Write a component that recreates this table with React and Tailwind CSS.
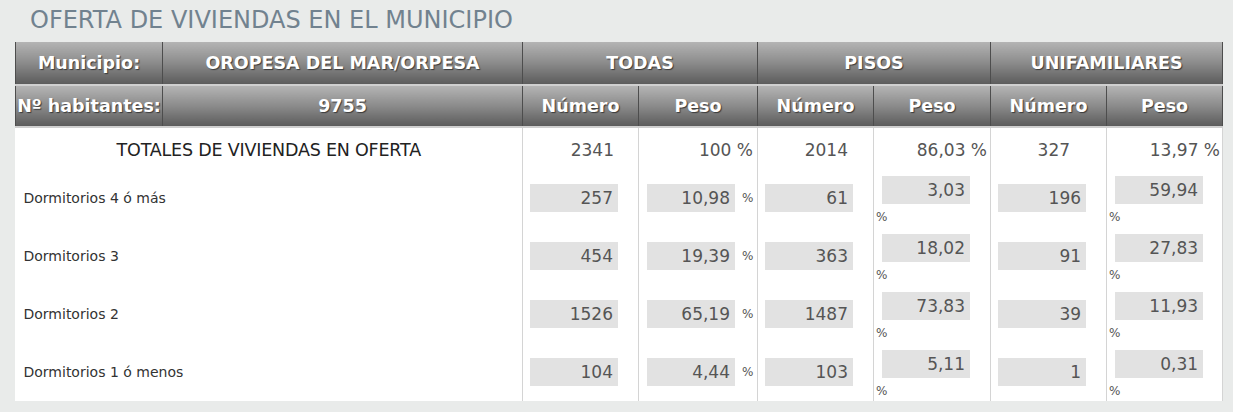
import React from "react";

const filas = [
  { label: "Dormitorios 4 ó más", tn: "257", tp: "10,98", pn: "61", pp: "3,03", un: "196", up: "59,94" },
  { label: "Dormitorios 3", tn: "454", tp: "19,39", pn: "363", pp: "18,02", un: "91", up: "27,83" },
  { label: "Dormitorios 2", tn: "1526", tp: "65,19", pn: "1487", pp: "73,83", un: "39", up: "11,93" },
  { label: "Dormitorios 1 ó menos", tn: "104", tp: "4,44", pn: "103", pp: "5,11", un: "1", up: "0,31" },
];

const th =
  "border-x border-[#4d4d4d] border-b-2 border-b-[#cfcfcf] bg-linear-to-b from-[#b4b4b4] via-[#8b8b8b] to-[#5c5c5c] text-white font-bold text-[17.5px] text-center [text-shadow:1px_1px_1px_#3a3a3a] p-0";

const Caja = ({ children }) => (
  <div className="w-[88px] h-[28px] bg-[#e2e2e2] text-right pr-[5px] leading-[28px] text-[17px] text-[#555]">
    {children}
  </div>
);

export default function App() {
  return (
    <div className="min-h-[412px] bg-[#e9ebea] pt-[5px] font-['DejaVu_Sans',Tahoma,sans-serif]">
      <h1 className="pl-[30px] text-[24px] leading-[31px] text-[#71828f] font-normal">
        OFERTA DE VIVIENDAS EN EL MUNICIPIO
      </h1>
      <table className="ml-[15px] mt-[6px] w-[1207px] table-fixed border-collapse bg-white">
        <colgroup>
          <col className="w-[147px]" />
          <col className="w-[360px]" />
          <col className="w-[116px]" />
          <col className="w-[119px]" />
          <col className="w-[116px]" />
          <col className="w-[117px]" />
          <col className="w-[116px]" />
          <col className="w-[116px]" />
        </colgroup>
        <thead>
          <tr className="h-[43px]">
            <th className={th}>Municipio:</th>
            <th className={th}>OROPESA DEL MAR/ORPESA</th>
            <th className={th} colSpan={2}>TODAS</th>
            <th className={th} colSpan={2}>PISOS</th>
            <th className={th} colSpan={2}>UNIFAMILIARES</th>
          </tr>
          <tr className="h-[42px]">
            <th className={th + " whitespace-nowrap"}>Nº habitantes:</th>
            <th className={th}>9755</th>
            <th className={th}>Número</th>
            <th className={th}>Peso</th>
            <th className={th}>Número</th>
            <th className={th}>Peso</th>
            <th className={th}>Número</th>
            <th className={th}>Peso</th>
          </tr>
        </thead>
        <tbody className="text-[#444]">
          <tr className="h-[42px] text-[16px]">
            <td colSpan={2} className="text-center text-[17.5px] tracking-[-0.2px] text-[#222] pt-[4px]">TOTALES DE VIVIENDAS EN OFERTA</td>
            <td className="border-x border-[#d4d4d4] text-right pr-[24px] text-[17px] text-[#555] pt-[4px]">2341</td>
            <td className="border-x border-[#d4d4d4] text-right pr-[4px] text-[17px] text-[#555] pt-[4px]">100 %</td>
            <td className="border-x border-[#d4d4d4] text-right pr-[25px] text-[17px] text-[#555] pt-[4px]">2014</td>
            <td className="border-x border-[#d4d4d4] text-right pr-[3px] text-[17px] text-[#555] pt-[4px]">86,03 %</td>
            <td className="border-x border-[#d4d4d4] text-right pr-[36px] text-[17px] text-[#555] pt-[4px]">327</td>
            <td className="border-x border-[#d4d4d4] text-right pr-[2px] text-[17px] text-[#555] pt-[4px]">13,97 %</td>
          </tr>
          {filas.map((f) => (
            <tr key={f.label} className="h-[58px]">
              <td colSpan={2} className="pl-[8px] text-[14px] text-[#333]">{f.label}</td>
              <td className="border-x border-[#d4d4d4] pl-[7px]">
                <Caja>{f.tn}</Caja>
              </td>
              <td className="border-x border-[#d4d4d4] pl-[8px]">
                <div className="flex items-center gap-[7px]">
                  <Caja>{f.tp}</Caja>
                  <span className="text-[12px] text-[#555]">%</span>
                </div>
              </td>
              <td className="border-x border-[#d4d4d4] pl-[7px]">
                <Caja>{f.pn}</Caja>
              </td>
              <td className="border-x border-[#d4d4d4] pl-[8px] pt-[7px] align-top">
                <Caja>{f.pp}</Caja>
                <div className="mt-[6px] text-[12px] leading-[14px] text-[#555] -ml-[6px]">%</div>
              </td>
              <td className="border-x border-[#d4d4d4] pl-[7px]">
                <Caja>{f.un}</Caja>
              </td>
              <td className="border-x border-[#d4d4d4] pl-[8px] pt-[7px] align-top">
                <Caja>{f.up}</Caja>
                <div className="mt-[6px] text-[12px] leading-[14px] text-[#555] -ml-[6px]">%</div>
              </td>
            </tr>
          ))}
        </tbody>
      </table>
    </div>
  );
}
